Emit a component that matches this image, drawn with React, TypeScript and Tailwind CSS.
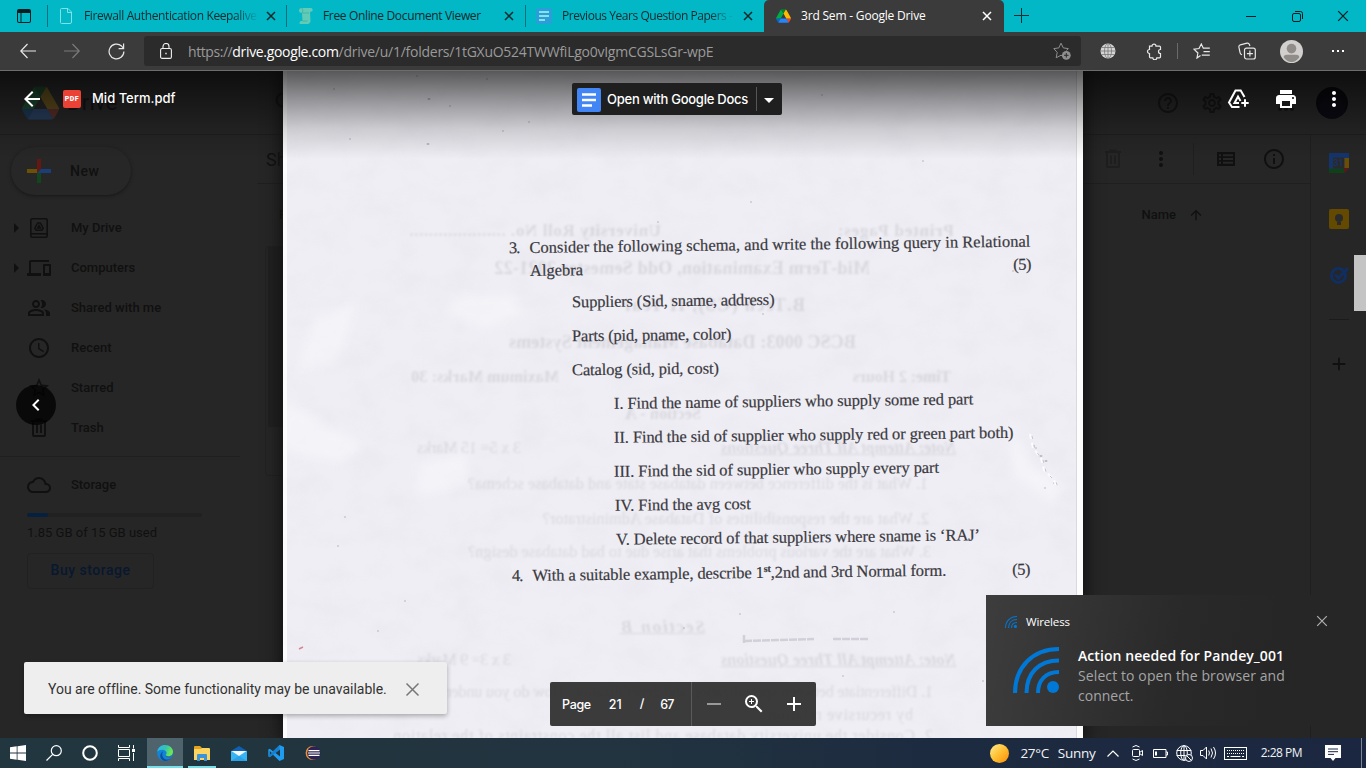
import React, { useLayoutEffect, useRef } from "react";
import {
  MdLocalPrintshop, MdMoreVert, MdArrowBack, MdZoomIn, MdAdd, MdRemove,
  MdOutlinePeopleAlt, MdAccessTime, MdStarBorder, MdOutlineDevices, MdOutlineCloud,
  MdInfoOutline, MdArrowUpward, MdHelpOutline, MdOutlineSettings, MdArrowRight,
  MdChevronLeft, MdArrowDropDown, MdSearch,
} from "react-icons/md";

/** Single-line text whose letter spacing is adjusted so that it spans `w` pixels. */
function Fit({ w, className = "", children }: { w: number; className?: string; children: React.ReactNode }) {
  const ref = useRef<HTMLSpanElement>(null);
  useLayoutEffect(() => {
    const el = ref.current;
    if (!el) return;
    el.style.letterSpacing = "0px";
    const n = (el.textContent || "").length;
    if (n > 1) el.style.letterSpacing = `${(w - el.offsetWidth) / (n - 1)}px`;
  }, [w]);
  return <span ref={ref} className={`inline-block shrink-0 whitespace-pre ${className}`}>{children}</span>;
}

const DriveLogo = ({ className }: { className: string }) => (
  <svg viewBox="0 0 87.3 78" className={className}>
    <path fill="#0066da" d="m6.6 66.85 3.85 6.65c.8 1.4 1.95 2.5 3.3 3.3l13.75-23.8h-27.5c0 1.55.4 3.1 1.2 4.5z" />
    <path fill="#00ac47" d="m43.65 25-13.75-23.8c-1.35.8-2.5 1.9-3.3 3.3l-25.4 44a9.06 9.06 0 0 0-1.2 4.5h27.5z" />
    <path fill="#ea4335" d="m73.55 76.8c1.35-.8 2.5-1.9 3.3-3.3l1.6-2.75 7.65-13.25c.8-1.4 1.2-2.95 1.2-4.5h-27.5l5.85 11.5z" />
    <path fill="#00832d" d="m43.65 25 13.75-23.8c-1.35-.8-2.9-1.2-4.5-1.2h-18.5c-1.6 0-3.15.45-4.5 1.2z" />
    <path fill="#2684fc" d="m59.8 53h-32.3l-13.75 23.8c1.35.8 2.9 1.2 4.5 1.2h50.8c1.6 0 3.15-.45 4.5-1.2z" />
    <path fill="#ffba00" d="m73.4 26.5-12.7-22c-.8-1.4-1.95-2.5-3.3-3.3l-13.75 23.8 16.15 28h27.45c0-1.55-.4-3.1-1.2-4.5z" />
  </svg>
);

const X = ({ className }: { className: string }) => (
  <svg viewBox="0 0 10 10" className={className} fill="none" stroke="currentColor"><path d="M1 1 9 9M9 1 1 9" /></svg>
);

function Tabs() {
  return (
    <header className="flex h-8 shrink-0 bg-[#02b8c7] font-['Open_Sans',sans-serif] text-[12px] text-[#12292c]">
      <div className="flex w-12 items-center justify-end border-r border-[#08707a] pr-4 [border-image:linear-gradient(transparent_18%,#08707a_18%_82%,transparent_82%)_1]">
        <svg viewBox="0 0 14 14" className="h-[14px] w-[14px]"><path fill="#071d20" fillRule="evenodd" d="M2 0h10a2 2 0 0 1 2 2v10a2 2 0 0 1-2 2H2a2 2 0 0 1-2-2V2a2 2 0 0 1 2-2ZM1 4v8a1 1 0 0 0 1 1h1.500V4ZM4.500 4v9H12a1 1 0 0 0 1-1V4Z" /></svg>
      </div>
      <div className="flex w-[239px] items-center border-r pl-3 [border-image:linear-gradient(transparent_18%,#08707a_18%_82%,transparent_82%)_1]">
        <svg viewBox="0 0 12 16" className="h-4 w-3" fill="none" stroke="#7de3e6" strokeWidth="1"><path d="M1.500.5H8l3.500 3.500v10q0 1.500-1.500 1.500H1.500Q.5 15.500.5 14.500v-13q0-1 1-1ZM7.500.5V4.500h4" /></svg>
        <div className="ml-3 w-[175px] overflow-hidden [mask-image:linear-gradient(90deg,#000_86%,transparent)]"><Fit w={173}>Firewall Authentication Keepalive</Fit></div>
        <X className="ml-[7px] h-[10px] w-[10px] stroke-[1.5]" />
      </div>
      <div className="flex w-[239px] items-center border-r pl-3 [border-image:linear-gradient(transparent_18%,#08707a_18%_82%,transparent_82%)_1]">
        <svg viewBox="0 0 14 16" className="h-4 w-[14px]"><path fill="#62cbb8" d="M3 0h9q2 0 1.500 3L11 4l.5 9q-.5 3-3 3H1q-1.500-2 1-3h1.500L3 5Q0 5 0 2.500T3 0Z" /><path d="M3 5h7M3 0q2 3 0 5M3.500 13h5" stroke="#3aa79d" fill="none" opacity=".6" /></svg>
        <Fit w={158} className="ml-[10px]">Free Online Document Viewer</Fit>
        <X className="ml-[23px] h-[10px] w-[10px] stroke-[1.5]" />
      </div>
      <div className="flex w-[238px] items-center pl-[10px]">
        <svg viewBox="0 0 16 16" className="h-4 w-4"><rect width="16" height="16" rx="2" fill="#299ed9" /><path d="M3 4h10M3 8h10M3 12h6" stroke="#8adfed" strokeWidth="1.800" /></svg>
        <div className="ml-[10px] w-[172px] overflow-hidden [mask-image:linear-gradient(90deg,#000_86%,transparent)]"><Fit w={171}>Previous Years Question Papers -</Fit></div>
        <X className="ml-[9px] h-[10px] w-[10px] stroke-[1.5]" />
      </div>
      <div className="flex w-[240px] items-center rounded-t-[5px] bg-[#3b3b3b] pl-3 text-white">
        <DriveLogo className="h-[14px] w-[15px]" />
        <Fit w={125} className="ml-[10px]">3rd Sem - Google Drive</Fit>
        <X className="ml-[56px] h-[10px] w-[10px] stroke-[1.5]" />
      </div>
      <svg viewBox="0 0 15 15" className="mt-[8px] ml-[10px] h-[15px] w-[15px]"><path d="M7.500 0v15M0 7.500h15" stroke="#0b2c30" /></svg>
      <div className="ml-auto flex items-center text-[#041a1c]">
        <div className="flex w-[46px] justify-center"><span className="h-px w-[10px] bg-current" /></div>
        <div className="flex w-[46px] justify-center"><svg viewBox="0 0 11 11" className="h-[11px] w-[11px]" fill="none" stroke="currentColor"><rect x=".5" y="2.500" width="8" height="8" rx="1.500" /><path d="M3 .5h5.500a2 2 0 0 1 2 2V8" /></svg></div>
        <div className="flex w-[46px] justify-center"><X className="h-3 w-3" /></div>
      </div>
    </header>
  );
}

function Toolbar() {
  return (
    <div className="flex h-[39px] shrink-0 items-center border-b border-[#6d6d6d] bg-[#3b3b3b] pl-[6px] text-[#e8e8e8]">
      <div className="flex w-11 justify-center"><svg viewBox="0 0 16 16" className="h-4 w-4" fill="none" stroke="currentColor" strokeWidth="1.200"><path d="M16 8H.8M7.500 1 .8 8l6.700 7" /></svg></div>
      <div className="flex w-11 justify-center text-[#7b7b7b]"><svg viewBox="0 0 16 16" className="h-4 w-4" fill="none" stroke="currentColor" strokeWidth="1.200"><path d="M0 8h15.200M8.500 1l6.700 7-6.700 7" /></svg></div>
      <div className="flex w-11 justify-center"><svg viewBox="0 0 17 17" className="h-[17px] w-[17px]" fill="none" stroke="currentColor" strokeWidth="1.200"><path d="M15.900 8.500A7.400 7.400 0 1 1 13.500 3l2 2.500M15.600.6v5h-5" /></svg></div>
      <div className="ml-[6px] flex h-[30px] w-[937px] items-center rounded-[3px] bg-[#2b2b2b] pl-4 font-['Open_Sans',sans-serif] text-[14px] text-[#9a9a9a]">
        <svg viewBox="0 0 12 16" className="h-4 w-3" fill="none" stroke="#f0f0f0" strokeWidth="1.100"><rect x=".6" y="5.500" width="10.800" height="9.900" rx="1.500" /><path d="M3 5.500V3.500a3 3 0 0 1 6 0v2" /><path d="M5.300 10.500h1.400" strokeWidth="1.600" /></svg>
        <span className="ml-4 flex"><Fit w={45}>https://</Fit><Fit w={107} className="text-white">drive.google.com</Fit><Fit w={375}>/drive/u/1/folders/1tGXuO524TWWfiLgo0vIgmCGSLsGr-wpE</Fit></span>
        <svg viewBox="0 0 18 18" className="mr-[10px] ml-auto h-[18px] w-[18px]" fill="none" stroke="#8f8f8f"><path d="M9.500 14 8 13.200 3.200 15.800l1-5.400L.8 6.600l5-.7L8 1.200l2.300 4.700 5 .7-2 2" /><circle cx="13.300" cy="13.300" r="4.400" fill="#8f8f8f" stroke="none" /><path d="M13.300 11v4.600M11 13.300h4.600" stroke="#2b2b2b" /></svg>
      </div>
      <div className="ml-1 flex w-[46px] justify-center"><svg viewBox="0 0 16 16" className="h-4 w-4"><circle cx="8" cy="8" r="7.500" fill="#d5d5d5" /><g fill="none" stroke="#777" strokeWidth=".8"><ellipse cx="8" cy="8" rx="3.500" ry="7.500" /><path d="M8 0v16M0 8h16M1.500 4.500h13M1.500 11.500h13" /></g></svg></div>
      <div className="flex w-[46px] justify-center"><svg viewBox="0 0 17 17" className="h-[17px] w-[17px]" fill="none" stroke="currentColor" strokeWidth="1.200"><path d="M3.500 3.200H6a2 2 0 1 1 4 0h3.500q1 0 1 1V6.500a2 2 0 1 0 0 4v3.300q0 1-1 1h-2.700a2 2 0 1 1-4 0H4.500q-1 0-1-1v-3.300a2 2 0 1 1 0-4Z" /></svg></div>
      <span className="h-4 w-px bg-[#6a6a6a]" />
      <div className="flex w-[48px] justify-center"><svg viewBox="0 0 18 16" className="h-4 w-[18px]" fill="none" stroke="currentColor" strokeWidth="1.200"><path d="M7.500 12.500 4 15l.9-5L1 6.200l5-.7L8.300 1l2 4.200h6.500M10.500 8.700h6.300M8.800 12.200h8" /></svg></div>
      <div className="flex w-[42px] justify-center"><svg viewBox="0 0 18 18" className="h-[18px] w-[18px]" fill="none" stroke="currentColor" strokeWidth="1.200"><rect x="6.500" y="6.200" width="10.800" height="10.800" rx="2" /><path d="M11.900 8.600v6M8.900 11.600h6M4 12.800q-1.500-.6-1.900-2L.9 5.200Q.6 3.400 2.300 2.800L9 1.100q1.800-.3 2.400 1.400l.5 1.500" /></svg></div>
      <div className="flex w-[47px] justify-center"><svg viewBox="0 0 22 22" className="h-[23px] w-[23px]"><circle cx="11" cy="11" r="11" fill="#d2d0ce" /><circle cx="11" cy="8.200" r="4.600" fill="#8f8c89" /><path d="M3.500 16.500q0-2.500 3-2.500h9q3 0 3 2.500-3 4.500-7.500 4.500t-7.500-4.500Z" fill="#8f8c89" /></svg></div>
      <div className="flex w-[46px] justify-center gap-[3px]"><span className="h-[2px] w-[2px] bg-white" /><span className="h-[2px] w-[2px] bg-white" /><span className="h-[2px] w-[2px] bg-white" /></div>
    </div>
  );
}

const MyDriveIcon = () => (
  <svg viewBox="0 0 18 20" className="h-5 w-[18px]" fill="none" stroke="currentColor" strokeWidth="1.600"><rect x=".8" y=".8" width="16.400" height="18.400" rx="1.500" /><path d="M1 15.800h16" /><path d="M7.700 5h2.600l2.900 5.200-1.300 2H6.100l-1.300-2ZM9 7.500l-1.400 2.600h2.800Z" strokeWidth="1.500" /></svg>
);

const TrashIcon = ({ className = "" }: { className?: string }) => (
  <svg viewBox="0 0 24 24" className={`h-6 w-6 ${className}`} fill="none" stroke="currentColor" strokeWidth="2"><path d="M4 5h16M9.500 5V3.500h5V5M6 5.500V19q0 1 1 1h10q1 0 1-1V5.500M10 8.500v8.500M14 8.500v8.500" /></svg>
);

const ListIcon = () => (
  <svg viewBox="0 0 24 24" className="ml-5 h-6 w-6"><path fill="currentColor" fillRule="evenodd" d="M3 5h18v14H3ZM5 7.200v2h2v-2ZM9 7.200v2h10v-2ZM5 11v2h2v-2ZM9 11v2h10v-2ZM5 14.800v2h2v-2ZM9 14.800v2h10v-2Z" /></svg>
);

const AddToDrive = () => (
  <svg viewBox="0 0 24 24" className="h-6 w-6" fill="none" stroke="currentColor" strokeWidth="2"><path d="M13.500 20H6L3 15.500 9.500 3.500h5.200L18.500 10M13 16H8.500L12 9.500l2.500 4.500M19 12.300v7.400M15.300 16h7.400" /></svg>
);

const NAV = [
  { label: "My Drive", w: 51, arrow: true, icon: <MyDriveIcon /> },
  { label: "Computers", w: 64, arrow: true, icon: <MdOutlineDevices /> },
  { label: "Shared with me", w: 90, arrow: false, icon: <MdOutlinePeopleAlt /> },
  { label: "Recent", w: 40, arrow: false, icon: <MdAccessTime /> },
  { label: "Starred", w: 43, arrow: false, icon: <MdStarBorder /> },
  { label: "Trash", w: 33, arrow: false, icon: <TrashIcon /> },
];

function DriveBackdrop() {
  return (
    <div className="flex h-full flex-col bg-[#262626] font-['Roboto',sans-serif] text-[13px] font-medium text-[#101010]">
      <div className="flex h-16 items-center border-b border-[#1e1e1e] text-[#131313]">
        <DriveLogo className="ml-[22px] h-[34px] w-[37px] opacity-25" />
        <span className="ml-2 text-[22px] font-normal"><Fit w={50}>Drive</Fit></span>
        <MdSearch className="ml-[154px] h-7 w-7" />
        <div className="ml-auto flex items-center text-[#151515]">
          <MdHelpOutline className="h-6 w-6" />
          <MdOutlineSettings className="ml-5 h-6 w-6" />
          <MdMoreVert className="mt-3 ml-[50px] h-6 w-6 rotate-90" />
          <span className="mr-[18px] ml-[18px] h-8 w-8 rounded-full bg-[radial-gradient(circle_at_50%_70%,#0a0a12_40%,#050505)]" />
        </div>
      </div>
      <div className="flex min-h-0 flex-1">
        <aside className="w-[257px]">
          <div className="mt-[12px] ml-[11px] flex h-12 w-[120px] items-center rounded-full bg-[#272727] pl-4 shadow-[0_1px_2px_#1b1b1b,0_1px_3px_1px_#222]">
            <svg viewBox="0 0 24 24" className="h-6 w-6"><path fill="#651813" d="M10 0h4v10l-4 4Z" /><path fill="#6b5005" d="M0 10h10v4H0Z" /><path fill="#13461e" d="M10 14h4v10h-4Z" /><path fill="#1b3e78" d="M14 10h10v4H10Z" /></svg>
            <Fit w={29} className="ml-[19px] text-[14px]">New</Fit>
          </div>
          <nav className="mt-[13px]">
            {NAV.map((n) => (
              <div key={n.label} className="flex h-10 items-center">
                <span className="flex w-[27px] justify-end">{n.arrow && <MdArrowRight className="-mr-[1px] h-6 w-6" />}</span>
                <span className="flex w-6 justify-center text-[24px]">{n.icon}</span>
                <Fit w={n.w} className="ml-5">{n.label}</Fit>
              </div>
            ))}
          </nav>
          <div className="mt-2 h-px w-[240px] bg-[#1f1f1f]" />
          <div className="mt-4 flex h-6 items-center pl-[27px]"><MdOutlineCloud className="h-6 w-6" /><Fit w={45} className="ml-5">Storage</Fit></div>
          <div className="mt-4 ml-[27px] flex h-1 w-[175px] overflow-hidden rounded bg-[#212121]"><span className="w-[21px] rounded bg-[#06203f]" /></div>
          <Fit w={130} className="mt-[6px] ml-[27px] block font-normal">1.85 GB of 15 GB used</Fit>
          <div className="mt-[10px] ml-[27px] flex h-9 w-[127px] items-center justify-center rounded border border-[#212121] text-[14px] text-[#08182f]"><Fit w={79}>Buy storage</Fit></div>
        </aside>
        <main className="flex flex-1 flex-col">
          <div className="flex h-[49px] items-center border-b border-[#1f1f1f]">
            <span className="ml-[9px] text-[18px] font-normal">Shared with me</span>
            <div className="ml-auto flex items-center">
              <TrashIcon className="text-[#1e1e1e]" />
              <MdMoreVert className="ml-6 h-6 w-6" />
              <span className="ml-5 h-8 w-px bg-[#1f1f1f]" />
              <ListIcon />
              <MdInfoOutline className="mr-6 ml-6 h-6 w-6" />
            </div>
          </div>
          <div className="flex h-[62px] items-center">
            <span className="ml-[22px]">Folders</span>
            <Fit w={35} className="ml-auto">Name</Fit>
            <MdArrowUpward className="mr-[106px] ml-3 h-4 w-4" />
          </div>
          <div className="ml-2 h-[230px] w-[200px] rounded border border-[#212121]"><div className="ml-[2px] h-[180px] bg-[#202020]" /></div>
        </main>
        <aside className="flex w-14 flex-col items-center border-l border-[#1f1f1f] pt-[18px]">
          <svg viewBox="0 0 20 20" className="h-5 w-5"><path fill="#14346c" d="M0 0h20v20H0Z" /><path fill="#0f4018" d="M0 15.500h15V20H0Z" /><path fill="#6b4d03" d="M15.500 5H20v10h-4.500Z" /><path fill="#262626" d="M20 15v5h-5Z" /><path fill="#5e1813" d="M15 15h5l-5 5Z" /><path fill="#2a2a2a" d="M4 4.500h11v11H4Z" /><text x="9.500" y="13" fontSize="9" textAnchor="middle" fill="#14346c" fontFamily="Roboto">31</text></svg>
          <svg viewBox="0 0 20 20" className="mt-9 h-5 w-5"><rect width="20" height="20" rx="2" fill="#644a00" /><circle cx="10" cy="9" r="4" fill="#2b2b2b" /><path d="M8 13h4v3H8Z" fill="#2b2b2b" /></svg>
          <svg viewBox="0 0 20 20" className="mt-9 h-5 w-5" fill="none" stroke="#102f60" strokeWidth="3"><circle cx="9.500" cy="10.500" r="7" /><path d="m6 9.500 3.500 3.500L19 3" /></svg>
          <span className="mt-[34px] h-px w-5 bg-[#1b1b1b]" />
          <MdAdd className="mt-8 h-6 w-6 scale-90" />
        </aside>
      </div>
    </div>
  );
}

/* Lines printed on the reverse side of the sheet, showing through it mirrored. */
const REVERSE = [
  { x: 555, y: 158, w: 116, s: "text-[17px] font-bold", t: "Printed Pages:" },
  { x: 126, y: 158, w: 252, s: "text-[17px] font-bold", t: "University Roll No. ...................." },
  { x: 211, y: 195, w: 376, s: "text-[18px] font-bold", t: "Mid-Term Examination, Odd Semester 2021-22" },
  { x: 340, y: 232, w: 182, s: "text-[18px] font-bold", t: "B.Tech (CS), II Year" },
  { x: 226, y: 269, w: 347, s: "text-[18px] font-bold", t: "BCSC 0003: Database Management Systems" },
  { x: 570, y: 305, w: 98, s: "text-[16px] font-bold", t: "Time: 2 Hours" },
  { x: 128, y: 305, w: 148, s: "text-[16px] font-bold", t: "Maximum Marks: 30" },
  { x: 342, y: 342, w: 76, s: "text-[16px] font-bold", t: "Section - A" },
  { x: 438, y: 376, w: 235, s: "text-[16px] font-bold italic underline", t: "Note: Attempt All Three Questions" },
  { x: 134, y: 376, w: 104, s: "text-[16px]", t: "3 x 5= 15 Marks" },
  { x: 185, y: 412, w: 460, s: "text-[16px]", t: "1. What is the difference between database state and database schema?" },
  { x: 260, y: 447, w: 386, s: "text-[16px]", t: "2. What are the responsibilities of Database Administrator?" },
  { x: 185, y: 480, w: 463, s: "text-[16px]", t: "3. What are the various problems that arise due to bad database design?" },
  { x: 338, y: 554, w: 84, s: "text-[17px] font-bold italic underline", t: "Section B" },
  { x: 438, y: 588, w: 235, s: "text-[16px] font-bold italic underline", t: "Note: Attempt All Three Questions" },
  { x: 134, y: 588, w: 94, s: "text-[16px]", t: "3 x 3= 9 Marks" },
  { x: 130, y: 620, w: 520, s: "text-[16px]", t: "1. Differentiate between specialization and generalization. How do you understand" },
  { x: 480, y: 643, w: 150, s: "text-[16px]", t: "by recursive relation." },
  { x: 110, y: 664, w: 540, s: "text-[16px]", t: "2. Consider the university database and list all the constraints of the relation" },
];

const SPECKS = [
  [134, 5, 1], [146, 28, 1.5], [51, 18, 1], [145, 73, 1.5], [167, 35, 1], [204, 8, 1], [220, 60, 1], [246, 51, 1], [375, 151, 1], [468, 131, 1],
  [480, 243, 1], [67, 68, 1], [62, 446, 1], [55, 475, 1], [95, 560, 1], [122, 530, 1], [401, 557, 1], [611, 541, 1], [457, 543, 1],
  [667, 369, 1.5], [753, 377, 1], [758, 385, 1.5], [763, 390, 1.5], [751, 375, 1], [762, 417, 1], [771, 412, 1], [415, 626, 1], [120, 593, 1],
  [560, 605, 1], [700, 610, 1], [730, 200, 1], [640, 90, 1], [539, 24, 1],
];

function Row({ mt, pad, children }: { mt: string; pad: string; children: React.ReactNode }) {
  return <div className={`flex h-5 origin-left rotate-[-0.72deg] items-center ${mt} ${pad}`}>{children}</div>;
}

function ScannedPage() {
  return (
    <section className="relative h-full w-[800px] overflow-hidden bg-[#efeef4] shadow-[0_0_14px_4px_#141414]">
      <svg className="absolute inset-0 h-full w-full" viewBox="0 0 800 667">
        <filter id="paper" x="0" y="0" width="100%" height="100%">
          <feTurbulence type="fractalNoise" baseFrequency="0.03 0.04" numOctaves="5" seed="8" />
          <feColorMatrix values="0 0 0 0 .55  0 0 0 0 .55  0 0 0 0 .62  .7 0 0 0 -.28" />
        </filter>
        <filter id="soft"><feGaussianBlur stdDeviation="5" /></filter>
        <rect width="800" height="667" filter="url(#paper)" opacity=".25" />
        <g filter="url(#soft)" fill="#f9f9fd" opacity=".5">
          <path d="M0 330 80 375 60 392 0 380ZM175 225h55l10 20-40 12-35-12ZM135 392l50-8v30l-50 10ZM30 250l45-20-20 60-40 10Z" />
          <path d="M725 350l25 45 30 20-10 18-40-30Z" />
        </g>
        <g fill="#8b8792">{SPECKS.map(([x, y, r], i) => <ellipse key={i} cx={x} cy={y} rx={r} ry={r * 0.7} opacity=".5" />)}</g>
        <path d="M747 363l3 14 8 10 3 12 10 10 3 8" stroke="#fdfdff" strokeWidth="2" fill="none" strokeDasharray="5 4" />
        <path d="M749 365l3 14 8 10 3 12 10 10 3 8" stroke="#c6c3cf" fill="none" strokeDasharray="3 6" />
        <path d="m16 578 4-2" stroke="#d6868f" strokeWidth="1.500" />
        <path d="M461 564v9M461 570l70-2M550 568h36" stroke="#bfbcc7" strokeWidth="2.500" strokeDasharray="8 1" opacity=".6" />
      </svg>
      <div className="absolute inset-0 font-['Liberation_Serif',serif] text-[#4a4858] opacity-[.13] blur-[1px]">
        {REVERSE.map((r, i) => (
          <div key={i} className="absolute -scale-x-100 leading-none" style={{ left: r.x, top: r.y - 7, width: r.w }}><Fit w={r.w} className={r.s}>{r.t}</Fit></div>
        ))}
      </div>
      <article className="relative pt-[170px] font-['Liberation_Serif',serif] text-[16.5px] leading-5 text-[#3a393f] [-webkit-text-stroke:0.2px_#3a393f]">
        <Row mt="" pad="pl-[226px]"><Fit w={11}>3.</Fit><Fit w={501} className="ml-[10px]">Consider the following schema, and write the following query in Relational</Fit></Row>
        <Row mt="mt-[3px]" pad="pl-[247px]"><Fit w={53}>Algebra</Fit><Fit w={18} className="ml-[430px]">(5)</Fit></Row>
        <Row mt="mt-3" pad="pl-[289px]"><Fit w={203}>Suppliers (Sid, sname, address)</Fit></Row>
        <Row mt="mt-[14px]" pad="pl-[289px]"><Fit w={160}>Parts (pid, pname, color)</Fit></Row>
        <Row mt="mt-[14px]" pad="pl-[289px]"><Fit w={147}>Catalog (sid, pid, cost)</Fit></Row>
        <Row mt="mt-[14px]" pad="pl-[331px]"><Fit w={359}>I. Find the name of suppliers who supply some red part</Fit></Row>
        <Row mt="mt-[14px]" pad="pl-[331px]"><Fit w={400}>II. Find the sid of supplier who supply red or green part both)</Fit></Row>
        <Row mt="mt-[14px]" pad="pl-[331px]"><Fit w={325}>III. Find the sid of supplier who supply every part</Fit></Row>
        <Row mt="mt-[14px]" pad="pl-[332px]"><Fit w={136}>IV. Find the avg cost</Fit></Row>
        <Row mt="mt-[14px]" pad="pl-[333px]"><Fit w={364}>V. Delete record of that suppliers where sname is ‘RAJ’</Fit></Row>
        <Row mt="mt-[15px]" pad="pl-[229px]"><Fit w={11}>4.</Fit><Fit w={414} className="ml-[10px]">With a suitable example, describe 1<sup className="-top-[6px] text-[10px] font-bold">st</sup>,2nd and 3rd Normal form.</Fit><Fit w={18} className="ml-[66px]">(5)</Fit></Row>
      </article>
      <div className="absolute inset-y-0 left-0 w-1 bg-white/80" />
      <div className="absolute inset-y-0 right-0 w-[7px] border-l border-[#d9d9df] bg-[#fdfdfd]" />
    </section>
  );
}

function Viewer() {
  return (
    <div className="absolute inset-0 overflow-hidden font-['Roboto',sans-serif]">
      <div className="flex h-full justify-center"><ScannedPage /></div>
      <div className="absolute inset-x-0 top-0 flex h-[88px] items-start bg-[linear-gradient(rgba(0,0,0,.63),rgba(0,0,0,.36)_35%,rgba(0,0,0,.14)_66%,transparent)] text-white">
        <div className="mt-4 flex h-6 w-[572px] shrink-0 items-center pl-5">
          <MdArrowBack className="h-6 w-6" />
          <span className="ml-[19px] flex h-[18px] w-[18px] items-center justify-center rounded-[2px] bg-[#ea4335] text-[7px] font-black"><Fit w={14}>PDF</Fit></span>
          <Fit w={83} className="ml-[11px] font-['Inter',sans-serif] text-[13px] font-medium">Mid Term.pdf</Fit>
        </div>
        <div className="mt-3 flex h-8 w-[210px] shrink-0 items-center rounded-[2px] bg-[#1f1f1f] pl-[5px]">
          <svg viewBox="0 0 24 24" className="mt-px h-6 w-6"><rect width="24" height="24" rx="2" fill="#4285f4" /><path d="M5 6.500h14M5 12h14M5 17.500h10" stroke="#fff" strokeWidth="2.400" /></svg>
          <Fit w={141} className="mt-[2px] ml-[6px] font-['Inter',sans-serif] text-[13px] font-medium">Open with Google Docs</Fit>
          <span className="ml-2 h-6 w-px bg-[#555]" />
          <MdArrowDropDown className="mt-[2px] h-6 w-6" />
        </div>
        <div className="mt-4 flex h-6 flex-1 items-center justify-end pr-5">
          <AddToDrive /><MdLocalPrintshop className="ml-6 h-6 w-6" /><MdMoreVert className="ml-6 h-6 w-6" />
        </div>
      </div>
      <div className="absolute top-[314px] left-4 flex h-10 w-10 items-center justify-center rounded-full bg-black/75 text-white"><MdChevronLeft className="h-6 w-6" /></div>
      <div className="absolute top-[184px] right-0 h-14 w-3 bg-[#c4c4c4]" />
      <div className="absolute top-[591px] left-6 flex h-[52px] w-[423px] items-center rounded-[2px] bg-[#eee] pt-[2px] pl-6 text-[14px] text-[#333] shadow-[0_2px_5px_rgba(0,0,0,.3)]">
        <Fit w={338}>You are offline. Some functionality may be unavailable.</Fit>
        <X className="ml-[18px] h-[15px] w-[15px] text-[#777]" />
      </div>
      <div className="absolute top-[611px] left-[550px] flex h-11 w-[266px] items-center rounded-[2px] bg-[#2d2d2d]/93 font-['Inter',sans-serif] text-[12.5px] font-medium text-white">
        <Fit w={29} className="mt-[2px] ml-3">Page</Fit><Fit w={13} className="mt-[2px] ml-[18px]">21</Fit><span className="ml-[18px]">/</span><Fit w={14} className="mt-[2px] ml-[16px]">67</Fit>
        <span className="ml-auto h-full w-px bg-[#5a5a5a]" />
        <MdRemove className="ml-[10px] h-6 w-6 text-[#999]" /><MdZoomIn className="ml-4 h-6 w-6" /><MdAdd className="mr-[10px] ml-4 h-6 w-6" />
      </div>
    </div>
  );
}

const Waves = ({ className }: { className: string }) => (
  <svg viewBox="0 0 46 46" className={className} fill="none" stroke="#0078d7" strokeWidth="4"><path d="M2 46C2 20 20 2 46 2M13.500 46C13.500 26 26 13.500 46 13.500M25 46C25 33 33 25 46 25" /><circle cx="40" cy="40" r="6" fill="#0078d7" stroke="none" /></svg>
);

function Notification() {
  return (
    <div className="absolute top-[595px] right-0 h-[131px] w-[380px] bg-[linear-gradient(100deg,#3d3d3e,#363637_18%,#29292a_50%,#262626_75%)] pt-[20px] font-['Open_Sans',sans-serif]">
      <div className="flex h-3 items-center pl-[19px] text-[11.5px] text-white">
        <Waves className="mt-[2px] h-3 w-3" /><Fit w={44} className="mt-[2px] ml-[9px]">Wireless</Fit>
        <X className="mr-[38px] ml-auto h-3 w-3 text-[#b0b0b0]" />
      </div>
      <div className="mt-[19px] flex pl-[27px]">
        <Waves className="mt-[1px] h-[46px] w-[46px]" />
        <div className="ml-[19px] flex flex-col text-[14px] leading-5 text-[#a5a5a5]">
          <span className="flex h-5 text-white"><Fit w={206} className="font-semibold">Action needed for Pandey_001</Fit></span>
          <span className="flex h-5"><Fit w={207}>Select to open the browser and</Fit></span>
          <span className="flex h-5"><Fit w={56}>connect.</Fit></span>
        </div>
      </div>
    </div>
  );
}

function Taskbar() {
  return (
    <footer className="flex h-[30px] shrink-0 items-center bg-[linear-gradient(90deg,#22363f,#21343f_45%,#1d2b40_68%,#1b2740)] font-['Open_Sans',sans-serif] text-[#f1f3f5]">
      <svg viewBox="0 0 16 16" className="ml-[10px] h-4 w-4"><path fill="#fff" d="M0 2.200 6.700 1.300V7.500H0ZM7.500 1.200 16 0v7.500H7.500ZM0 8.400h6.700v6.300L0 13.800ZM7.500 8.400H16V16l-8.500-1.200Z" /></svg>
      <svg viewBox="0 0 16 16" className="ml-5 h-4 w-4" fill="none" stroke="#fff" strokeWidth="1.200"><circle cx="10.300" cy="5.700" r="5" /><path d="M6.700 9.300.5 15.500" /></svg>
      <svg viewBox="0 0 16 16" className="ml-5 h-4 w-4" fill="none" stroke="#fff" strokeWidth="2"><circle cx="8" cy="8" r="6.800" /></svg>
      <svg viewBox="0 0 17 16" className="ml-5 h-4 w-[17px]" fill="none" stroke="#fff"><path d="M.5 0v2.500h11V0M.5 16v-2.500h11V16M.5 4.500h11v7H.5ZM15.500 0v3.500M15.500 8v8" /><path d="M14 4h3v3h-3Z" fill="#fff" stroke="none" /></svg>
      <div className="ml-[12px] flex h-full w-9 items-center justify-center border-b-2 border-[#76dfe8] bg-[#4e636c] pt-[2px]">
        <svg viewBox="0 0 24 24" className="h-4 w-4">
          <defs><linearGradient id="e1" x1="0" y1="0" x2="1" y2=".35"><stop stopColor="#2cb8ee" /><stop offset=".55" stopColor="#35c1b3" /><stop offset="1" stopColor="#6ce94e" /></linearGradient></defs>
          <circle cx="12" cy="12" r="12" fill="#1283d6" />
          <path fill="url(#e1)" d="M.3 10C1.500 4 6 0 12 0c7 0 12 5 12 10.300 0 4-3 6.500-6.500 6.500-3 0-4.300-1-4.300-1.800 0-.6 1.200-1.200 1.200-3.200C14.400 9 11.600 7 8 7 4.500 7 1.600 8 .3 10Z" />
          <path fill="#0c4f9e" d="M9.500 9.800C7 12 7 17 11 20.500c3 2.200 7.500 2 11-2-2.200 3.500-6 5.500-10 5.500-5-.5-7.500-5-7-8.500.4-3 2.500-4.900 4.500-5.700Z" />
          <path fill="#4e636c" d="M13.200 15c0 1.500 2 2.600 5 2.600 2.200 0 3.700-.6 4.800-1.500-.5 2-3.500 3.200-6.200 2.800-3.600-.6-4.900-3-3.600-3.900Z" />
        </svg>
      </div>
      <div className="ml-[5px] flex h-full w-7 items-center justify-center border-b-2 border-[#76dfe8] pt-[2px]">
        <svg viewBox="0 0 16 15" className="h-[15px] w-4"><path fill="#e5a21b" d="M0 1q0-1 1-1h5l2 2v3H0Z" /><path fill="#fcd462" d="M0 3h7l1-1h7q1 0 1 1v11H0Z" /><path fill="#3a93dd" d="M3 9q0-1 1-1h8q1 0 1 1v6h-3v-3H6v3H3Z" /></svg>
      </div>
      <svg viewBox="0 0 16 15" className="ml-[15px] h-[15px] w-4"><path fill="#0f5fb3" d="M0 5 8 0l8 5v3H0Z" /><path fill="#38b4f2" d="M0 5h16v10H0Z" /><path fill="#1b8fe0" d="m0 15 8-5 8 5Z" opacity=".5" /><path fill="#f4f8fb" d="M.5 5h15L8 10Z" /></svg>
      <svg viewBox="0 0 16 16" className="ml-[21px] h-4 w-4"><path fill="#1f9cf0" d="M11.500 0 16 2v12l-4.500 2L5 9.700 1.800 12.200.3 11.500V4.500l1.500-.7L5 6.300ZM12 4.500 7.500 8l4.500 3.500ZM1.800 6v4L3.800 8Z" fillRule="evenodd" /><path fill="#0a6ab8" d="m0 11.200 11.500-11V5L1.800 12.200Z" opacity=".55" /></svg>
      <svg viewBox="0 0 16 16" className="ml-[21px] h-4 w-4"><circle cx="7.500" cy="8" r="6.900" fill="#ef9436" /><circle cx="8.900" cy="8" r="6.800" fill="#2c2255" /><path d="M3.500 5.700h11M3 8h12M3.500 10.300h11" stroke="#fff" strokeWidth="1.200" /></svg>
      <span className="ml-auto h-[19px] w-[19px] rounded-full bg-[linear-gradient(135deg,#ffe680_10%,#ffbf31_50%,#fb8c08)]" />
      <Fit w={29} className="mt-px ml-[11px] text-[13.5px]">27°C</Fit>
      <Fit w={38} className="mt-px ml-[9px] text-[13.5px]">Sunny</Fit>
      <svg viewBox="0 0 12 7" className="ml-[11px] h-[7px] w-3" fill="none" stroke="#fff" strokeWidth="1.200"><path d="m.5 6.500 5.500-5.500 5.500 5.500" /></svg>
      <svg viewBox="0 0 12 16" className="ml-[12px] h-4 w-3" fill="none" stroke="#fff"><rect x="1.500" y="4.500" width="7" height="7" rx="1" /><path d="m8.500 7.500 3-2v5l-3-2M1.500 2q3.500-3 7 0M1.500 14q3.500 3 7 0" /></svg>
      <svg viewBox="0 0 15 9" className="ml-[10px] h-[9px] w-[15px]" fill="none" stroke="#fff"><path d="M.5.5h12.500v8H.5ZM13 3h1.500v3H13" /><path d="M3 2.500v4" strokeWidth="2" /></svg>
      <svg viewBox="0 0 17 17" className="ml-2 h-[17px] w-[17px]" fill="none" stroke="#fff"><circle cx="8" cy="8" r="7.300" /><ellipse cx="8" cy="8" rx="3.300" ry="7.300" /><path d="M.7 5.500h14.600M.7 10.500h9M8 .7v14" /><circle cx="13" cy="13" r="3.500" fill="#1c2940" /><path d="m10.700 10.700 4.600 4.600" /></svg>
      <svg viewBox="0 0 17 14" className="ml-[7px] h-[14px] w-[17px]" fill="none" stroke="#fff"><path d="M.5 4.500h2.500l3.500-3.500v12L3 9.500H.5ZM8.700 4.500q1.500 2.500 0 5M11 2.500q3 4.500 0 9M13.500 1q4 6 0 12" /></svg>
      <svg viewBox="0 0 23 13" className="ml-[7px] h-[13px] w-[23px]" fill="none" stroke="#fff"><rect x=".5" y=".5" width="22" height="12" /><path d="M3 3.500h17M3 6.500h17" strokeDasharray="1 1" /><path d="M3 9.500h2M6.500 9.500h10M18 9.500h2" /></svg>
      <Fit w={42} className="ml-[14px] text-[12px]">2:28 PM</Fit>
      <svg viewBox="0 0 16 16" className="ml-[23px] h-4 w-4"><path fill="#fff" d="M0 0h16v13h-5.500L8 16l-2.500-3H0Z" /><path d="M3 4h10M3 6.700h10M3 9.400h6" stroke="#1b2740" /></svg>
      <span className="mr-1 ml-5 h-full w-px bg-[#7a8495]" />
    </footer>
  );
}

export default function App() {
  return (
    <div className="relative flex h-[768px] w-[1366px] flex-col overflow-hidden bg-[#262626]">
      <Tabs />
      <Toolbar />
      <div className="relative min-h-0 flex-1">
        <DriveBackdrop />
        <Viewer />
      </div>
      <Taskbar />
      <Notification />
    </div>
  );
}
